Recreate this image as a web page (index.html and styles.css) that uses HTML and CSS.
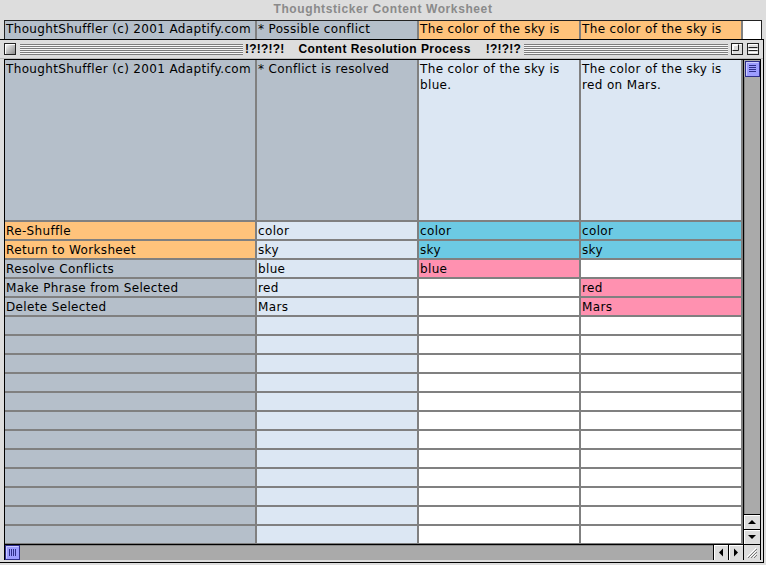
FILE: index.html
```html
<!DOCTYPE html>
<html>
<head>
<meta charset="utf-8">
<link rel="stylesheet" href="styles.css">
</head>
<body>
<div class="screen">
  <div class="back">
    <div class="back-title">Thoughtsticker Content Worksheet</div>
    <div class="back-row">
      <div class="cell gb">ThoughtShuffler (c) 2001 Adaptify.com</div>
      <div class="cell gb">* Possible conflict</div>
      <div class="cell or">The color of the sky is</div>
      <div class="cell or">The color of the sky is</div>
      <div class="cell wh"></div>
    </div>
  </div>
  <div class="win">
    <div class="titlebar">
      <div class="closebox"></div>
      <div class="stripes stripes-left"></div>
      <div class="title"><span class="t-bang">!?!?!?!</span><span class="t-main">Content Resolution Process</span><span class="t-bang">!?!?!?</span></div>
      <div class="stripes stripes-right"></div>
      <svg class="tbox" width="12" height="12" viewBox="0 0 12 12">
        <rect x="0.5" y="0.5" width="11" height="11" fill="#dddddd" stroke="#222"/>
        <path d="M1.5 10.5V1.5H10.5" stroke="#fff" fill="none"/>
        <path d="M1.5 7.5H7.5V1.5" stroke="#222" fill="none"/>
        <path d="M2.5 6.5V2.5H6.5" stroke="#fff" fill="none"/>
      </svg>
      <svg class="tbox tbox2" width="12" height="12" viewBox="0 0 12 12">
        <rect x="0.5" y="0.5" width="11" height="11" fill="#dddddd" stroke="#222"/>
        <path d="M1.5 4.5H10.5M1.5 7.5H10.5" stroke="#222" fill="none"/>
        <path d="M1.5 3.5V1.5H10.5M1.5 6.5H10.5M1.5 9.5H10.5" stroke="#fff" fill="none"/>
      </svg>
    </div>
    <div class="content">
      <div class="main">
        <div class="grid">
          <div class="cell gb top">ThoughtShuffler (c) 2001 Adaptify.com</div>
          <div class="cell gb top">* Conflict is resolved</div>
          <div class="cell lb top">The color of the sky is blue.</div>
          <div class="cell lb top">The color of the sky is red on Mars.</div>

          <div class="cell or">Re-Shuffle</div><div class="cell lb">color</div><div class="cell cy">color</div><div class="cell cy">color</div>
          <div class="cell or">Return to Worksheet</div><div class="cell lb">sky</div><div class="cell cy">sky</div><div class="cell cy">sky</div>
          <div class="cell gb">Resolve Conflicts</div><div class="cell lb">blue</div><div class="cell pk">blue</div><div class="cell wh"></div>
          <div class="cell gb">Make Phrase from Selected</div><div class="cell lb">red</div><div class="cell wh"></div><div class="cell pk">red</div>
          <div class="cell gb">Delete Selected</div><div class="cell lb">Mars</div><div class="cell wh"></div><div class="cell pk">Mars</div>

          <div class="cell gb"></div><div class="cell lb"></div><div class="cell wh"></div><div class="cell wh"></div>
          <div class="cell gb"></div><div class="cell lb"></div><div class="cell wh"></div><div class="cell wh"></div>
          <div class="cell gb"></div><div class="cell lb"></div><div class="cell wh"></div><div class="cell wh"></div>
          <div class="cell gb"></div><div class="cell lb"></div><div class="cell wh"></div><div class="cell wh"></div>
          <div class="cell gb"></div><div class="cell lb"></div><div class="cell wh"></div><div class="cell wh"></div>
          <div class="cell gb"></div><div class="cell lb"></div><div class="cell wh"></div><div class="cell wh"></div>
          <div class="cell gb"></div><div class="cell lb"></div><div class="cell wh"></div><div class="cell wh"></div>
          <div class="cell gb"></div><div class="cell lb"></div><div class="cell wh"></div><div class="cell wh"></div>
          <div class="cell gb"></div><div class="cell lb"></div><div class="cell wh"></div><div class="cell wh"></div>
          <div class="cell gb"></div><div class="cell lb"></div><div class="cell wh"></div><div class="cell wh"></div>
          <div class="cell gb"></div><div class="cell lb"></div><div class="cell wh"></div><div class="cell wh"></div>
          <div class="cell gb"></div><div class="cell lb"></div><div class="cell wh"></div><div class="cell wh"></div>
        </div>
        <div class="vscroll">
          <svg class="vthumb" width="15" height="16" viewBox="0 0 15 16">
            <rect x="0.5" y="0.5" width="14" height="15" fill="#9c9cff" stroke="#2e2e8a"/>
            <path d="M1.5 14.5V1.5H13.5" stroke="#ccccff" fill="none"/>
            <path d="M4 4.5H11M4 6.5H11M4 8.5H11M4 10.5H11" stroke="#2e2e8a"/>
          </svg>
          <div class="vtrack"></div>
          <div class="arrow">
            <svg width="16" height="14" viewBox="0 0 16 14"><path d="M4 9H12L8 5Z" fill="#000"/></svg>
          </div>
          <div class="arrow">
            <svg width="16" height="14" viewBox="0 0 16 14"><path d="M4 5H12L8 9Z" fill="#000"/></svg>
          </div>
        </div>
      </div>
      <div class="hscroll">
        <svg class="hthumb" width="15" height="15" viewBox="0 0 15 15">
          <rect x="0.5" y="0.5" width="14" height="14" fill="#9c9cff" stroke="#2e2e8a"/>
          <path d="M1.5 13.5V1.5H13.5" stroke="#ccccff" fill="none"/>
          <path d="M4.5 4V11M6.5 4V11M8.5 4V11M10.5 4V11" stroke="#2e2e8a"/>
        </svg>
        <div class="htrack"></div>
        <div class="harrow">
          <svg width="14" height="15" viewBox="0 0 14 15"><path d="M9 3.5V11.5L5 7.5Z" fill="#000"/></svg>
        </div>
        <div class="harrow">
          <svg width="14" height="15" viewBox="0 0 14 15"><path d="M5 3.5V11.5L9 7.5Z" fill="#000"/></svg>
        </div>
        <div class="grow">
          <svg width="16" height="15" viewBox="0 0 16 15">
            <path d="M4 13L13 4M7 13L13 7M10 13L13 10" stroke="#777" fill="none"/>
            <path d="M3 12L12 3M6 12L12 6M9 12L12 9" stroke="#fff" fill="none"/>
          </svg>
        </div>
      </div>
    </div>
  </div>
</div>
</body>
</html>
```

FILE: styles.css
```css
body {
  margin: 0;
  background: #dddddd;
  font-family: "DejaVu Sans", "Verdana", sans-serif;
  font-size: 12px;
  letter-spacing: 0.35px;
  color: #000;
}

.screen {
  width: 766px;
  height: 565px;
  overflow: hidden;
  background: #dddddd;
}

.back-title {
  height: 20px;
  line-height: 19px;
  text-align: center;
  font-family: "Liberation Sans", Arial, sans-serif;
  font-weight: bold;
  font-size: 12px;
  letter-spacing: 0.6px;
  color: #8a8a8a;
}

.back-row {
  display: grid;
  grid-template-columns: 250px 160px 160px 160px 18px;
  column-gap: 2px;
  margin-left: 4px;
  width: 756px;
  height: 18px;
  border-top: 1px solid #222;
  border-left: 1px solid #222;
  border-right: 1px solid #222;
  background: #808080;
}

.cell {
  padding: 1px 1px 0 1px;
  line-height: 16px;
  white-space: nowrap;
  overflow: hidden;
}

.back-row .cell {
  padding-top: 0;
  line-height: 17px;
}

.cell.top {
  white-space: normal;
  line-height: 16px;
  padding-top: 1px;
}

.gb { background: #b5bfca; }
.lb { background: #dce7f3; }
.or { background: #ffc37b; }
.cy { background: #6ccae4; }
.pk { background: #ff91b0; }
.wh { background: #ffffff; }

.win {
  width: 763px;
  border-top: 1px solid #000;
  border-right: 1px solid #000;
  border-bottom: 1px solid #000;
  background: #dddddd;
  padding-bottom: 2px;
}

.titlebar {
  height: 18px;
  border-bottom: 1px solid #bbbbbb;
  display: flex;
  align-items: center;
  padding-left: 4px;
}

.closebox {
  width: 10px;
  height: 10px;
  border: 1px solid #222;
  background: linear-gradient(135deg, #ffffff 0%, #c8c8c8 45%, #8a8a8a 100%);
  box-shadow: inset 1px 1px 0 #fff;
  flex: none;
}

.stripes {
  height: 11px;
  background: repeating-linear-gradient(to bottom, #7c7c7c 0 1px, #f6f6f6 1px 2px);
}

.stripes-left {
  width: 223px;
  margin-left: 4px;
  flex: none;
}

.stripes-right {
  flex: 1;
  margin-left: 3px;
  margin-right: 3px;
}

.title {
  margin-left: 2px;
  display: flex;
  font-family: "Liberation Sans", Arial, sans-serif;
  font-weight: bold;
  font-size: 12px;
  white-space: nowrap;
  line-height: 18px;
  letter-spacing: 0;
}

.t-main {
  letter-spacing: 0.45px;
  margin: 0 15px 0 14px;
}

.t-bang {
  letter-spacing: 0.2px;
}

.tbox {
  flex: none;
  display: block;
}

.tbox2 {
  margin-left: 4px;
  margin-right: 4px;
}

.content {
  margin-left: 4px;
  width: 756px;
  border-top: 1px solid #000;
  border-left: 1px solid #000;
}

.main {
  display: flex;
}

.grid {
  display: grid;
  grid-template-columns: 250px 160px 160px 160px;
  grid-template-rows: 160px repeat(17, 17px);
  gap: 2px;
  padding-right: 2px;
  padding-bottom: 1px;
  background: #808080;
}

.vscroll {
  width: 16px;
  border-left: 1px solid #000;
  border-right: 1px solid #000;
  background: #aaaaaa;
  display: flex;
  flex-direction: column;
}

.vthumb {
  display: block;
  margin-top: 1px;
  margin-left: 1px;
}

.vtrack {
  flex: 1;
  box-shadow: inset 1px 0 0 #888;
}

.arrow {
  height: 14px;
  border-top: 1px solid #000;
  background: #dddddd;
  box-shadow: inset 1px 1px 0 #fff;
}

.arrow svg, .harrow svg, .grow svg {
  display: block;
}

.hscroll {
  display: flex;
  height: 15px;
  border-top: 1px solid #000;
  background: #aaaaaa;
}

.hthumb {
  display: block;
  flex: none;
}

.htrack {
  flex: 1;
  box-shadow: inset 0 1px 0 #888;
}

.harrow {
  width: 14px;
  border-left: 1px solid #000;
  background: #dddddd;
  box-shadow: inset 1px 1px 0 #fff;
}

.grow {
  width: 16px;
  border-left: 1px solid #000;
  border-right: 1px solid #000;
  background: #dddddd;
}
```
